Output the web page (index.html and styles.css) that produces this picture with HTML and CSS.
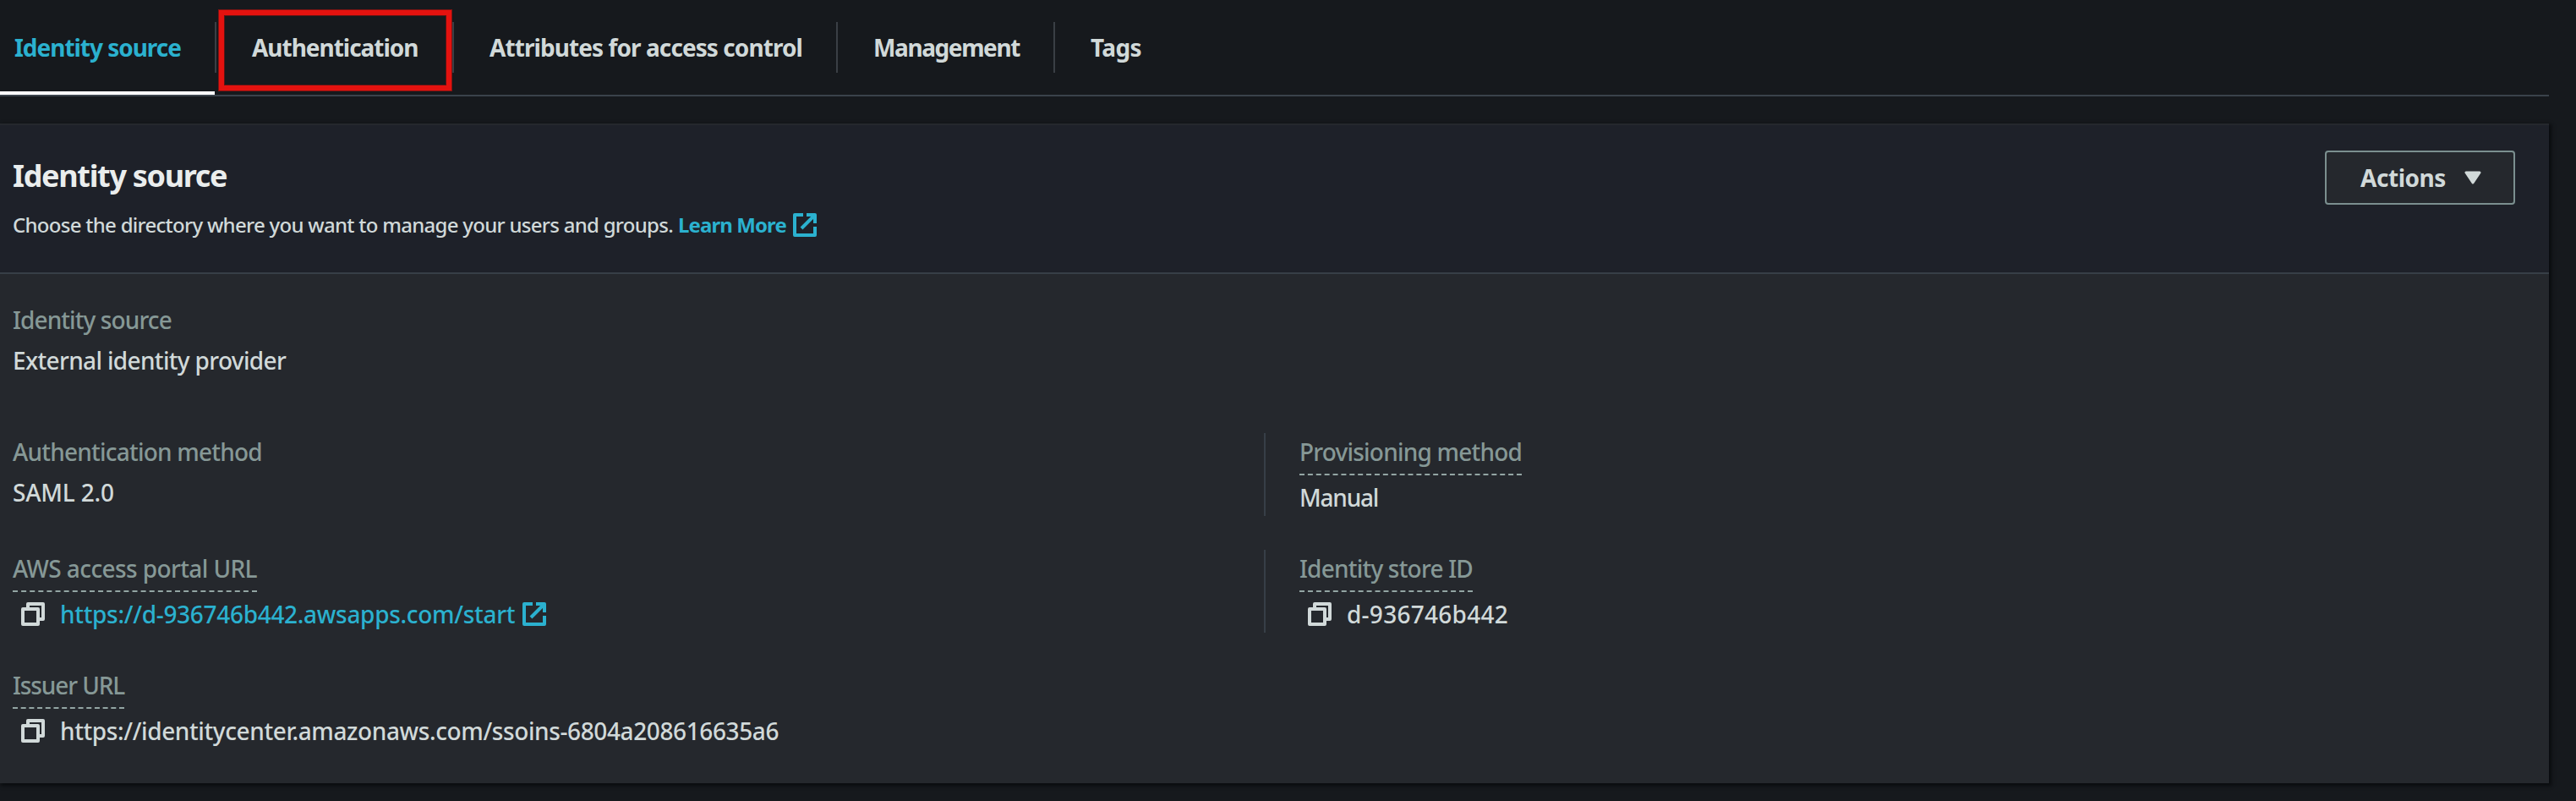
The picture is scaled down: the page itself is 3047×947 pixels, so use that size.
FILE: index.html
```
<!DOCTYPE html>
<html lang="en">
<head>
<meta charset="utf-8">
<title>Identity source</title>
<link rel="stylesheet" href="styles.css">
</head>
<body>
<svg class="sprite" width="0" height="0">
  <symbol id="external" viewBox="0 0 28 28"><path d="M12 2H2V26H26V16M16 2H26V12M25.500 2.500L10 18" fill="none" stroke="currentColor" stroke-width="4" stroke-linejoin="round"/></symbol>
  <symbol id="copy" viewBox="0 0 28 28"><path d="M2 8H20V26H2ZM8 8V2H26V20H20" fill="none" stroke="currentColor" stroke-width="4" stroke-linejoin="round"/></symbol>
</svg>
<nav class="tabs">
  <a class="tab tab-active">Identity source</a>
  <a class="tab tab-auth">Authentication<i class="highlight"></i></a>
  <a class="tab tab-attr">Attributes for access control</a>
  <a class="tab tab-mgmt">Management</a>
  <a class="tab tab-tags">Tags</a>
</nav>
<main class="panel">
  <header class="panel-header">
    <div>
      <h1>Identity source</h1>
      <p class="description"><span>Choose the directory where you want to manage your users and groups.</span><a class="learn"><span>Learn More</span><svg class="icon"><use href="#external"/></svg></a></p>
    </div>
    <button class="actions"><span>Actions</span><svg class="caret" viewBox="0 0 20 16"><path d="M2 2H18L10 14Z" fill="currentColor" stroke="currentColor" stroke-width="3" stroke-linejoin="round"/></svg></button>
  </header>
  <div class="details">
    <section class="field source"><div class="label source-label">Identity source</div><div class="value provider">External identity provider</div></section>
    <section class="field"><div class="label">Authentication method</div><div class="value saml">SAML 2.0</div></section>
    <section class="field split"><div class="label hint">Provisioning method</div><div class="value manual">Manual</div></section>
    <section class="field"><div class="label hint portal-label">AWS access portal URL</div><div class="value copyable"><svg class="icon"><use href="#copy"/></svg><a class="link"><span>https://d-936746b442.awsapps.com/start</span><svg class="icon"><use href="#external"/></svg></a></div></section>
    <section class="field split"><div class="label hint">Identity store ID</div><div class="value copyable"><svg class="icon"><use href="#copy"/></svg><span class="store-id">d-936746b442</span></div></section>
    <section class="field"><div class="label hint issuer-label">Issuer URL</div><div class="value copyable"><svg class="icon"><use href="#copy"/></svg><span class="issuer">https://identitycenter.amazonaws.com/ssoins-6804a208616635a6</span></div></section>
  </div>
</main>
</body>
</html>
```
FILE: styles.css
```
* { box-sizing: border-box; }
body {
  margin: 0;
  height: 947px;
  overflow: hidden;
  background: #16191d;
  color: #d1d9d9;
  font: 500 28px/44px "Noto Sans", "Open Sans", sans-serif;
  white-space: nowrap;
}
.sprite { display: block; height: 0; }
.tabs {
  display: flex;
  align-items: flex-start;
  width: 3015px;
  height: 114px;
  border-bottom: 2px solid #3a424b;
  font-weight: 700;
  letter-spacing: -1.03px;
}
.tab {
  position: relative;
  display: flex;
  height: 60px;
  margin-top: 26px;
  padding: 8px 0 0 42px;
  border-right: 2px solid #3a3f45;
}
.tab-active { width: 256px; padding-left: 17px; color: #2bb1cf; }
.tab-active::after {
  content: "";
  position: absolute;
  left: 0;
  top: 82px;
  width: 254px;
  height: 4px;
  background: #fff;
}
.tab-auth { width: 281px; }
.tab-attr { width: 454px; letter-spacing: -0.92px; }
.tab-mgmt { width: 257px; letter-spacing: -1.4px; }
.tab-tags { border: 0; letter-spacing: -0.6px; }
.highlight {
  position: absolute;
  left: 2px;
  top: -15px;
  width: 277px;
  height: 97px;
  border: 7px solid #e4120f;
  outline: 1px solid #7e1412;
  outline-offset: -1px;
  box-shadow: inset 0 0 0 1px #5c1414;
}
.panel {
  width: 3015px;
  height: 780px;
  margin-top: 32px;
  background: #25282d;
  border-top: 2px solid #25282d;
  box-shadow: 2px 2px 4px 1px #0a0c0f;
}
.panel-header {
  display: flex;
  justify-content: space-between;
  height: 176px;
  padding: 30px 40px 0 15px;
  background: #1e2129;
  border-bottom: 2px solid #373f47;
}
h1 { margin: 0; color: #eaeded; font-size: 36px; line-height: 60px; letter-spacing: -1.32px; }
.description { display: flex; margin: 6px 0 0; font-size: 24px; line-height: 44px; letter-spacing: -0.72px; }
.learn { display: flex; align-items: center; margin-left: 6px; gap: 8px; color: #2bb1cf; font-weight: 700; letter-spacing: -0.9px; }
.icon { flex: none; width: 28px; height: 28px; }
.actions {
  display: flex;
  align-items: center;
  width: 225px;
  height: 64px;
  padding: 0 0 0 40px;
  border: 2px solid #7b8f8f;
  border-radius: 4px;
  background: #25282d;
  color: #d1d9d9;
  font: inherit;
  font-weight: 700;
  letter-spacing: -0.45px;
}
.caret { width: 20px; height: 16px; margin-left: 22px; }
.details {
  display: grid;
  grid-template-columns: 1495px 1520px;
  grid-template-rows: 116px 98px 98px 98px;
  row-gap: 40px;
  padding-top: 32px;
}
.field { padding-left: 15px; }
.source { grid-column: 1 / -1; }
.split { padding-left: 40px; border-left: 2px solid #373f47; }
.label { width: max-content; height: 48px; color: #869896; letter-spacing: -0.79px; }
.source-label { letter-spacing: -0.9px; }
.portal-label { letter-spacing: -0.6px; }
.issuer-label { letter-spacing: -1.1px; }
.value { height: 48px; }
.provider { letter-spacing: -0.66px; }
.saml { letter-spacing: -0.2px; }
.manual { padding-top: 4px; letter-spacing: -1.2px; }
.hint { height: 50px; border-bottom: 2px dashed #93a5a3; }
.copyable { display: flex; align-items: center; padding: 4px 0 0 10px; gap: 18px; }
.link { display: flex; align-items: center; gap: 9px; color: #2bb1cf; letter-spacing: -0.31px; }
.store-id { letter-spacing: 0.26px; }
.issuer { letter-spacing: -0.39px; }
```
